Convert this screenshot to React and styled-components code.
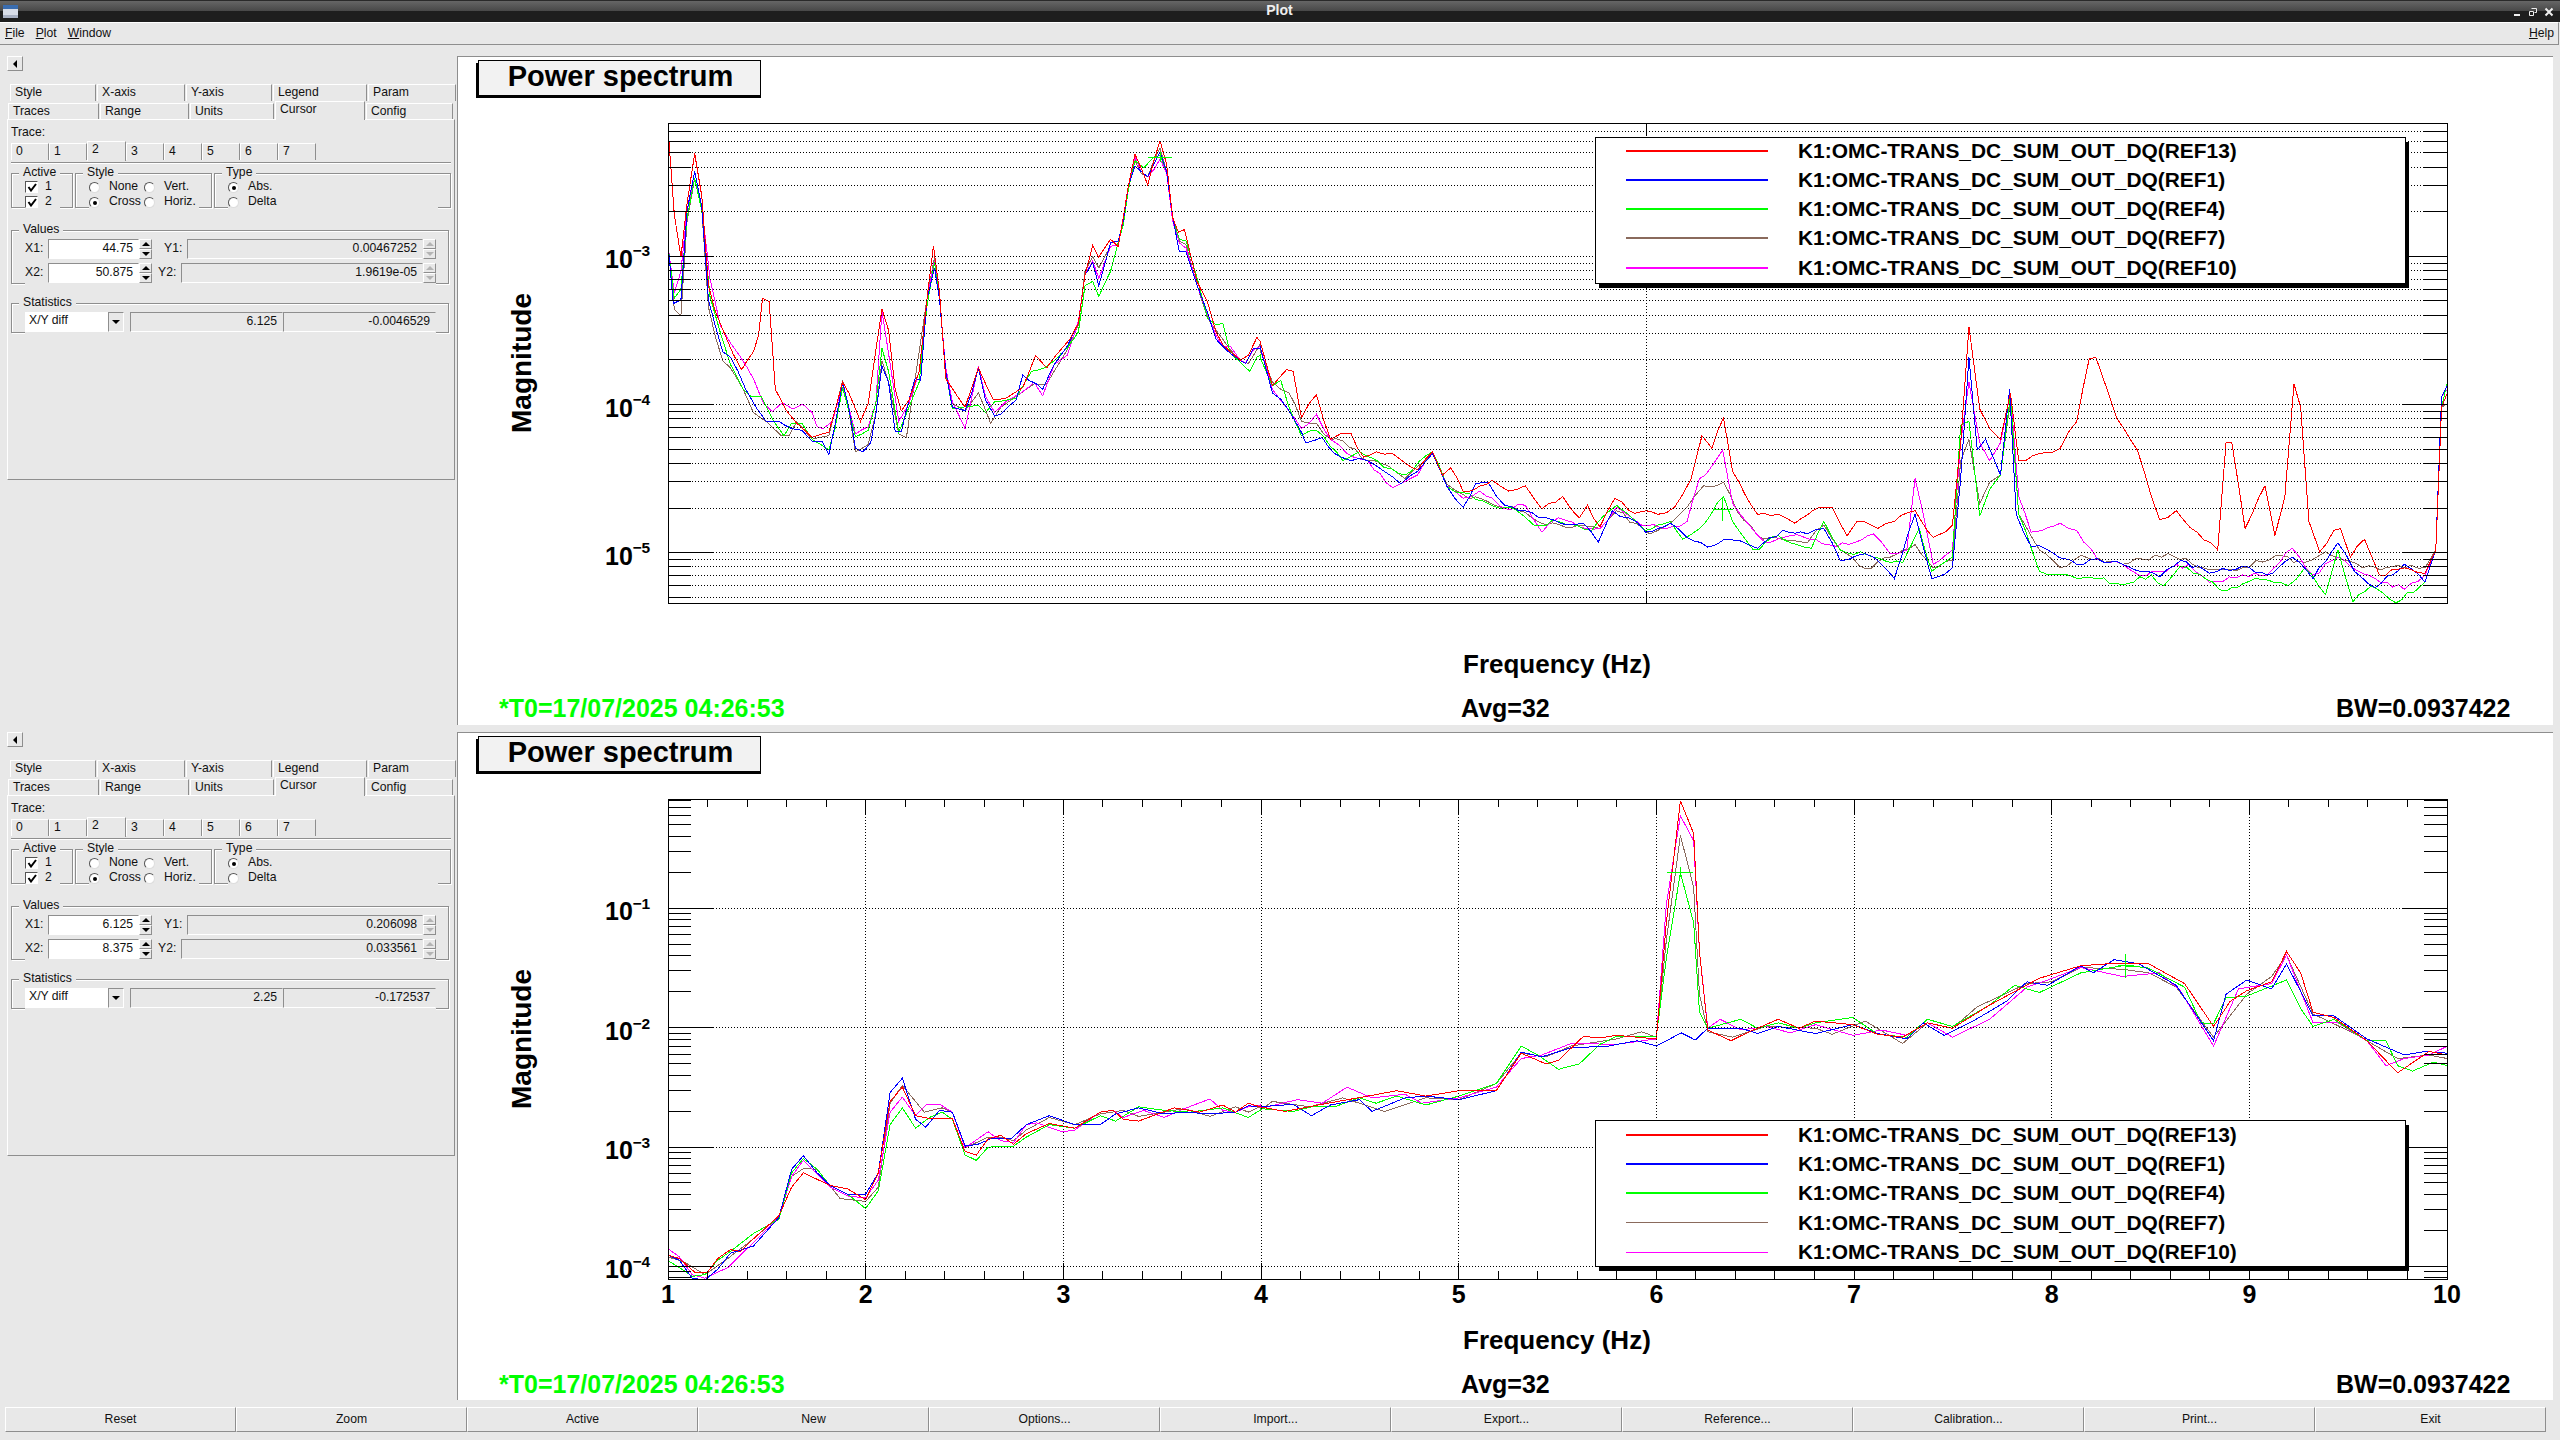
import styled, {createGlobalStyle} from 'styled-components'

const PANEL = '#e8e8e8'
const SHADE = '#8e8e8e'

const GlobalStyle = createGlobalStyle`
  html, body {
    margin: 0;
    width: 2560px;
    height: 1440px;
    overflow: hidden;
    background: ${PANEL};
  }
  * {
    box-sizing: border-box;
  }
`

const Window = styled.div`
  display: flex;
  flex-direction: column;
  width: 2560px;
  height: 1440px;
  background: ${PANEL};
  color: #111;
  font: 12.2px/14px "Liberation Sans", Arial, sans-serif;
`

const TitleBar = styled.header`
  display: grid;
  grid-template-columns: 1fr auto 1fr;
  align-items: center;
  height: 22px;
  padding: 0 6px 0 3px;
  background: linear-gradient(#2a2a2a 0 1px, #666 1px, #484848 11px, #1e1e1e 11px);
  color: #eee;
  font-weight: bold;
  font-size: 14px;
`

const TitleText = styled.span`
  margin: -2px 0 0 2px;
`

const WindowButtons = styled.div`
  display: flex;
  justify-content: flex-end;
  gap: 6px;
  margin-top: 1px;
`

const MenuBar = styled.nav`
  display: flex;
  align-items: center;
  gap: 11px;
  height: 23px;
  margin-right: 1px;
  padding: 0 4px 1px 5px;
  border-top: 1px solid #fff;
  border-bottom: 1px solid ${SHADE};
  border-right: 1px solid ${SHADE};
`

const MenuItem = styled.span`
  margin-left: ${(p) => (p.$push ? 'auto' : '0')};

  &::first-letter {
    text-decoration: underline;
  }
`

const Workspace = styled.main`
  display: grid;
  grid-template-rows: 669px 668px;
  row-gap: 7px;
  padding-top: 11px;
`

const Pane = styled.section`
  display: flex;
  min-height: 0;
`

const Side = styled.aside`
  flex: none;
  width: 457px;
  padding-left: 7px;
`

const Canvas = styled.div`
  flex: none;
  width: 2096px;
  background: #fff;
  border-left: 1px solid ${SHADE};
  border-top: 1px solid ${SHADE};

  svg {
    display: block;
    margin: -1px 0 0 -1px;
  }
`

const CollapseButton = styled.div`
  display: flex;
  align-items: center;
  justify-content: center;
  width: 16px;
  height: 15px;
  margin-bottom: 13px;
  border: 1px solid;
  border-color: #fff ${SHADE} ${SHADE} #fff;
`

const Arrow = styled.span`
  display: block;
  width: 0;
  height: 0;
  border-style: solid;
  border-color: transparent;
  ${(p) => {
    const color = p.$muted ? '#b4b4b4' : '#000'
    if (p.$dir === 'left') return `border-width: 4px 4px 4px 0; border-right-color: ${color};`
    if (p.$dir === 'up') return `border-width: 0 4px 4px; border-bottom-color: ${color};`
    return `border-width: 4px 4px 0; border-top-color: ${color};`
  }}
`

const TabRow = styled.div`
  display: flex;
  gap: 1px;
  height: ${(p) => p.$height}px;
  margin-left: ${(p) => p.$indent}px;
  margin-bottom: ${(p) => p.$gap}px;
`

const Tab = styled.div`
  position: relative;
  z-index: ${(p) => (p.$active ? 1 : 0)};
  width: ${(p) => p.$width}px;
  height: ${(p) => (p.$active ? 'calc(100% + 3px)' : '100%')};
  margin-top: ${(p) => (p.$active ? '-2px' : '0')};
  padding-left: 4px;
  background: ${PANEL};
  border-top: 1px solid #fff;
  border-left: 1px solid #fff;
  border-right: 1px solid ${SHADE};
  line-height: 14px;
`

const TabPanel = styled.div`
  width: 448px;
  height: 361px;
  padding-left: 3px;
  border: 1px solid;
  border-color: #fff ${SHADE} ${SHADE} #fff;
`

const TraceLabel = styled.div`
  padding-top: 5px;
  height: 23px;
`

const TraceTabs = styled.div`
  display: flex;
  height: 20px;
  width: 440px;
  padding-bottom: 3px;
  border-bottom: 1px solid ${SHADE};
  box-shadow: 0 1px #fff;
`

const TraceTab = styled.div`
  position: relative;
  width: ${(p) => (p.$active ? 39 : 38)}px;
  height: ${(p) => (p.$active ? 20 : 17)}px;
  margin-top: ${(p) => (p.$active ? -2 : 0)}px;
  padding-left: 4px;
  border-top: 1px solid #fff;
  border-left: 1px solid #fff;
  border-right: 1px solid ${SHADE};
  line-height: 15px;
`

const GroupRow = styled.div`
  display: flex;
  gap: 2px;
  margin-top: 3px;
`

const Group = styled.fieldset`
  width: ${(p) => p.$width}px;
  margin: ${(p) => p.$top || 0}px ${(p) => p.$right || 0}px 0 0;
  padding: 0;
  min-width: 0;
  border: 1px solid ${SHADE};
  box-shadow: inset 1px 1px #fff, 1px 1px #fff;

  legend {
    margin-left: 7px;
    padding: 0 4px;
    background: ${PANEL};
    line-height: 14px;
    transform: translateY(-1px);
  }
`

const GroupBody = styled.div`
  position: relative;
  margin: 0 12px -3px 13px;
  padding: ${(p) => p.$pad};
  background: ${PANEL};
`

const OptionGrid = styled.div`
  display: grid;
  grid-template-columns: ${(p) => p.$columns};
  grid-auto-rows: 14px;
  row-gap: 1px;
  margin-top: -1px;
`

const Option = styled.label`
  display: flex;
  align-items: center;
  gap: ${(p) => p.$gap}px;
  white-space: nowrap;
`

const CheckBox = styled.span`
  display: flex;
  align-items: center;
  justify-content: center;
  width: 13px;
  height: 12px;
  margin-top: 2px;
  background: #fff;
  border: 1px solid;
  border-color: #555 #fff #fff #555;
`

const Radio = styled.span`
  display: flex;
  flex: none;
  align-items: center;
  justify-content: center;
  width: 11px;
  height: 11px;
  margin-top: 3px;
  border-radius: 50%;
  background: #fff;
  border: 1px solid;
  border-color: #555 #ddd #ddd #555;

  &::after {
    content: '';
    width: 4px;
    height: 4px;
    border-radius: 50%;
    background: ${(p) => (p.$on ? '#000' : 'transparent')};
  }
`

const ValueRow = styled.div`
  display: flex;
  align-items: stretch;
  height: 20px;
  margin-bottom: ${(p) => p.$gap || 0}px;
`

const FieldLabel = styled.span`
  flex: none;
  width: 23px;
  margin-left: ${(p) => p.$indent || 0}px;
  line-height: 18px;
`

const NumberField = styled.div`
  flex: ${(p) => (p.$width ? 'none' : 1)};
  width: ${(p) => (p.$width ? `${p.$width}px` : 'auto')};
  margin-left: ${(p) => p.$indent || 0}px;
  padding-right: 5px;
  text-align: right;
  line-height: 17px;
  background: ${(p) => (p.$editable ? '#fff' : PANEL)};
  border: 1px solid;
  border-color: ${SHADE} ${(p) => (p.$editable ? '#fff' : PANEL)} #fff ${SHADE};
`

const Spinner = styled.div`
  display: grid;
  grid-template-rows: 1fr 1fr;
  flex: none;
  width: 13px;
`

const SpinButton = styled.span`
  display: flex;
  align-items: center;
  justify-content: center;
  border: 1px solid;
  border-color: #fff ${SHADE} ${SHADE} #fff;
`

const ComboBox = styled.div`
  display: flex;
  flex: none;
  width: 99px;
  background: #fff;
`

const ComboText = styled.span`
  flex: 1;
  padding-left: 4px;
  line-height: 17px;
`

const ComboButton = styled.span`
  display: flex;
  align-items: center;
  justify-content: center;
  width: 16px;
  background: ${PANEL};
  border: 1px solid;
  border-color: ${SHADE} #fff #fff ${SHADE};
`

const ButtonBar = styled.footer`
  display: flex;
  margin: 7px 0 0 5px;
`

const ActionButton = styled.button`
  width: 231px;
  height: 25px;
  padding: 0 0 2px;
  font: inherit;
  color: #111;
  background: ${PANEL};
  border: 1px solid;
  border-color: #fff ${SHADE} ${SHADE} #fff;
`

const PlotText = styled.text`
  font-family: "Liberation Sans", Arial, sans-serif;
  font-weight: bold;
  font-size: ${(p) => p.$size}px;
  fill: ${(p) => p.$color || '#000'};
`

const pairs = (flat) => {
  const out = []
  for (let i = 0; i < flat.length; i += 2) out.push([flat[i], flat[i + 1]])
  return out
}

// reference coordinates were read off two crops, converted back to page pixels here
const place = (left, right, top) => [
  ...pairs(left).map(([x, y]) => [460 + x / 1.96, top + y / 2.8]),
  ...pairs(right).map(([x, y]) => [1260 + x / 1.206, top + y / 2.8]),
]

const noise = (i, seed) => {
  const v = Math.sin(i * 12.9898 + seed * 78.233) * 43758.5453
  return (v - Math.floor(v)) * 2 - 1
}

// adds the bin-to-bin wiggle the anchor points leave out
const roughen = (points, seed) => {
  const out = []
  let counter = 0
  for (let i = 0; i < points.length - 1; i++) {
    const [ax, ay] = points[i]
    const [bx, by] = points[i + 1]
    const n = Math.max(1, Math.floor((bx - ax) / 5.75))
    for (let k = 0; k < n; k++) {
      const amp = ax > 1260 ? 2.6 : 0.6
      const jitter = k === 0 ? 0 : noise(counter++, seed) * amp
      out.push([ax + ((bx - ax) * k) / n, ay + ((by - ay) * k) / n + jitter])
    }
  }
  out.push(points[points.length - 1])
  return out
}

const RED = '#ff0000'
const BLUE = '#0000ff'
const GREEN = '#00ff00'
const BROWN = '#8a6a5c'
const MAGENTA = '#ff00ff'

const TOP_TRACES = [
  {
    color: BROWN,
    points: place(
      [407,540,420,725,433,745,445,480,460,360,474,450,487,720,500,800,515,870,530,890,555,950,575,1015,600,1040,630,1080,645,1080,660,1040,690,1090,723,1080,750,925,762,1010,775,1125,800,1105,815,1020,827,870,840,930,860,1075,875,1085,890,940,915,700,930,580,940,700,952,900,965,990,990,1010,1016,960,1040,1045,1060,1000,1090,970,1125,935,1150,935,1190,840,1212,770,1225,620,1240,578,1252,610,1275,550,1290,545,1300,470,1310,380,1323,310,1335,345,1348,355,1360,310,1372,275,1385,340,1397,470,1410,535,1423,545,1445,660,1465,750,1490,800,1510,840,1530,870,1545,878,1568,825],
      [0,840,15,930,35,960,50,1040,68,1045,85,1090,100,1095,130,1150,155,1165,175,1200,208,1130,225,1215,245,1245,275,1265,320,1295,345,1330,385,1330,410,1340,430,1290,470,1355,495,1325,515,1280,535,1220,559,1210,575,1290,600,1360,630,1370,660,1380,680,1330,700,1400,730,1452,760,1420,790,1385,812,1450,835,1430,845,1150,855,1090,868,1270,880,1210,893,1190,905,980,915,1300,940,1400,965,1450,990,1415,1040,1440,1095,1410,1145,1455,1185,1450,1225,1415,1260,1435,1285,1405,1300,1420,1330,1450,1380,1450,1405,1450,1418,1400,1425,1000,1432,990],
      50,
    ),
  },
  {
    color: MAGENTA,
    points: place(
      [407,540,420,680,433,620,445,450,460,360,474,440,490,640,510,770,530,820,550,860,575,920,595,990,612,1012,632,988,652,1005,672,992,690,1015,700,1055,712,1060,730,1040,750,935,762,1000,775,1075,800,1055,815,990,827,730,840,850,860,1040,880,990,900,900,915,700,930,590,940,700,952,890,965,985,990,1060,1005,960,1016,885,1030,970,1048,1015,1070,985,1100,960,1125,930,1142,968,1165,880,1190,855,1212,760,1225,630,1240,590,1252,640,1275,550,1290,545,1300,470,1310,380,1323,300,1335,340,1348,355,1360,335,1372,305,1385,345,1397,480,1410,540,1423,555,1445,660,1465,740,1482,800,1495,830,1510,830,1530,870,1540,875,1555,840,1568,830],
      [0,830,15,950,35,1010,50,1060,68,1020,85,1090,105,1130,130,1150,160,1225,190,1190,208,1130,225,1220,245,1255,265,1235,295,1285,320,1275,340,1350,360,1310,385,1335,410,1340,430,1280,460,1330,490,1340,515,1320,530,1200,545,1165,558,1120,570,1270,590,1330,610,1380,640,1360,670,1370,695,1390,740,1355,760,1410,780,1400,790,1200,800,1300,812,1440,835,1400,845,1100,855,930,868,1100,880,1150,893,1100,905,960,915,1250,930,1350,965,1325,985,1345,1010,1425,1040,1440,1060,1470,1085,1460,1120,1440,1145,1490,1185,1470,1215,1470,1245,1395,1270,1470,1300,1420,1345,1480,1380,1510,1405,1470,1418,1400,1425,970,1432,950],
      50,
    ),
  },
  {
    color: GREEN,
    points: place(
      [407,540,420,695,433,670,445,470,460,360,474,450,490,690,510,790,530,880,555,950,570,970,590,970,615,1040,635,1080,650,1045,670,1045,690,1090,723,1120,735,1060,750,945,762,1010,775,1083,800,1065,815,990,827,835,840,900,860,1070,880,1000,900,930,915,720,930,595,940,700,952,900,965,1005,985,1000,1016,995,1030,1015,1048,985,1090,975,1120,900,1145,890,1165,870,1190,835,1212,790,1225,660,1240,648,1252,690,1275,620,1290,540,1300,490,1310,390,1323,310,1340,330,1360,300,1372,295,1385,340,1397,470,1410,530,1423,535,1445,640,1465,750,1482,770,1495,765,1510,850,1530,875,1548,900,1562,860,1568,855],
      [0,860,15,940,25,925,35,1000,50,1080,68,1065,85,1110,100,1150,120,1125,150,1170,175,1190,208,1125,225,1220,245,1240,275,1270,310,1290,330,1330,360,1320,400,1345,430,1275,465,1345,495,1320,510,1370,530,1340,559,1250,570,1320,595,1400,625,1360,665,1395,680,1320,700,1400,740,1420,775,1435,795,1340,810,1460,835,1420,845,1050,855,1040,868,1305,880,1230,893,1190,905,970,915,1300,940,1460,965,1470,1010,1480,1040,1498,1075,1470,1090,1500,1110,1445,1165,1515,1200,1480,1240,1500,1260,1450,1285,1525,1300,1400,1318,1545,1340,1500,1370,1548,1405,1490,1418,1400,1425,1000,1432,930],
      50,
    ),
  },
  {
    color: BLUE,
    points: place(
      [407,530,418,710,433,700,445,450,460,340,474,440,487,700,500,770,515,845,530,860,545,900,560,950,580,1000,600,1040,625,1040,650,1060,670,1065,690,1095,710,1095,723,1133,735,1050,750,930,762,1000,775,1115,790,1125,805,1100,815,1020,827,885,840,930,853,1068,865,1068,880,980,892,920,903,925,915,700,930,610,940,700,952,900,965,1000,990,1010,1003,960,1016,890,1030,980,1048,1025,1060,1020,1090,980,1103,910,1115,925,1130,935,1142,950,1165,880,1190,830,1212,765,1225,630,1240,595,1252,660,1275,540,1290,535,1300,480,1310,380,1323,325,1335,340,1348,355,1360,320,1372,285,1385,340,1397,470,1410,565,1423,565,1445,660,1465,735,1482,810,1495,830,1510,850,1530,870,1540,878,1555,835,1568,835],
      [0,830,15,960,35,1010,50,1070,55,1100,75,1085,90,1130,110,1150,130,1150,150,1180,170,1215,190,1180,208,1130,225,1220,245,1280,260,1215,275,1210,295,1275,320,1290,345,1310,370,1330,390,1325,408,1378,425,1290,445,1310,465,1350,495,1325,515,1365,540,1392,560,1370,580,1375,600,1395,630,1345,660,1355,680,1340,700,1430,720,1415,740,1420,765,1480,790,1300,810,1480,835,1450,845,1200,855,860,865,1120,875,1090,893,1190,904,950,912,1300,930,1390,950,1400,985,1440,1010,1425,1040,1440,1085,1475,1110,1430,1145,1465,1185,1445,1215,1470,1245,1420,1270,1480,1300,1380,1320,1460,1345,1505,1380,1440,1405,1490,1418,1400,1425,970,1432,940],
      50,
    ),
  },
  {
    color: RED,
    points: place(
      [407,205,420,460,433,580,445,430,460,290,474,410,487,660,500,730,520,800,535,850,552,895,575,845,585,800,593,695,606,705,618,950,640,1010,660,1045,690,1085,723,1070,750,930,762,960,785,1040,800,990,827,725,840,785,853,950,865,1010,880,980,900,900,915,700,928,548,940,680,952,920,990,1000,1016,890,1045,978,1070,975,1103,945,1128,855,1150,890,1165,860,1195,810,1212,765,1225,630,1240,548,1252,580,1275,530,1290,550,1300,470,1310,380,1323,292,1335,330,1348,378,1360,310,1372,254,1385,320,1397,470,1408,510,1420,503,1445,650,1465,705,1482,790,1495,825,1510,845,1530,868,1545,855,1562,805,1568,815],
      [0,815,15,940,32,895,40,900,50,1030,68,965,85,1090,97,1075,110,1075,125,1140,140,1125,160,1130,190,1175,208,1125,220,1190,230,1170,245,1235,280,1205,300,1235,320,1220,340,1285,365,1250,385,1310,395,1275,410,1335,428,1255,445,1290,480,1300,500,1280,520,1200,533,1080,545,1115,559,1030,570,1180,600,1300,625,1300,645,1325,675,1280,690,1280,708,1360,720,1320,745,1340,765,1320,790,1290,812,1365,835,1330,845,1100,855,775,868,1005,880,1060,893,1090,905,960,915,1150,940,1130,965,1115,985,1040,1000,865,1008,860,1020,940,1033,1030,1058,1120,1075,1250,1085,1315,1105,1290,1130,1350,1155,1400,1165,1100,1172,1100,1188,1340,1212,1220,1224,1360,1236,1250,1247,935,1255,1000,1265,1320,1278,1405,1295,1345,1303,1340,1315,1420,1332,1370,1350,1470,1380,1450,1405,1465,1418,1400,1425,1000,1432,960],
      50,
    ),
  },
].map((t, i) => ({...t, points: roughen(t.points, i + 1)}))

const BOTTOM_TRACES = [
  {
    color: BROWN,
    points: place(
      [407,1335,440,1350,480,1385,520,1345,575,1285,625,1222,650,1110,673,1088,700,1090,745,1172,795,1180,820,1140,843,905,867,855,910,930,945,918,965,930,990,1030,1035,1000,1060,1000,1085,1010,1110,980,1155,945,1205,965,1255,935,1300,925,1330,942,1380,930,1420,920,1470,942,1520,915,1545,930,1568,915],
      [0,925,15,900,60,915,100,890,150,928,200,890,240,895,285,850,315,765,345,775,375,745,430,725,460,705,478,720,490,450,507,155,523,300,530,600,540,705,570,720,610,690,670,695,690,712,730,675,775,738,805,680,835,695,865,635,925,570,955,565,990,525,1040,530,1072,540,1105,580,1150,720,1190,600,1220,550,1238,490,1270,655,1320,710,1372,780,1410,770,1432,780],
      780,
    ),
  },
  {
    color: MAGENTA,
    points: place(
      [407,1312,430,1335,455,1385,480,1395,525,1365,575,1295,625,1225,650,1110,673,1065,725,1140,760,1165,795,1170,820,1120,843,930,867,888,893,940,915,908,940,908,965,930,990,1030,1035,985,1060,1010,1085,1015,1110,965,1130,960,1180,985,1205,980,1255,930,1280,925,1300,945,1340,925,1380,945,1420,920,1470,893,1495,925,1520,930,1545,915,1568,910],
      [0,920,45,895,75,905,105,860,135,890,175,880,195,905,240,890,285,860,315,780,340,770,375,738,430,740,478,725,490,350,507,100,523,170,530,480,540,695,555,670,580,700,610,690,640,708,670,685,715,715,750,700,780,715,805,680,835,720,880,670,925,580,950,560,990,525,1040,550,1085,540,1110,590,1150,745,1180,585,1220,570,1238,490,1270,680,1300,680,1335,730,1358,800,1380,780,1410,770,1432,745],
      780,
    ),
  },
  {
    color: GREEN,
    points: place(
      [407,1345,430,1365,455,1390,480,1385,505,1345,530,1320,575,1270,625,1230,650,1100,673,1060,700,1090,725,1135,760,1160,795,1200,820,1150,843,965,867,918,893,975,920,945,945,930,965,950,990,1050,1012,1065,1035,1028,1085,1025,1110,1000,1155,965,1205,975,1255,940,1285,955,1330,915,1380,925,1430,930,1495,918,1545,945,1568,925],
      [0,920,40,928,62,915,90,915,120,890,140,905,165,885,200,910,240,885,285,850,315,745,335,770,360,810,385,795,410,740,430,718,478,718,490,500,507,260,523,400,530,650,540,695,580,670,600,695,625,680,650,695,670,680,715,665,745,712,780,720,805,670,835,690,880,630,910,575,940,595,990,540,1040,520,1070,525,1115,580,1135,680,1150,682,1165,610,1190,605,1238,560,1255,640,1270,690,1295,670,1335,730,1358,730,1372,800,1390,815,1415,790,1432,800],
      780,
    ),
  },
  {
    color: BLUE,
    points: place(
      [407,1330,430,1345,455,1395,480,1400,505,1370,530,1325,575,1305,625,1225,650,1090,673,1052,700,1100,725,1135,760,1160,795,1160,820,1100,843,875,867,835,893,950,913,972,940,925,965,930,990,1025,1015,1020,1040,1005,1080,1005,1110,965,1155,940,1205,965,1255,965,1285,935,1330,918,1380,935,1420,930,1470,935,1520,930,1545,912,1568,915],
      [0,915,40,908,62,940,85,910,120,895,135,928,175,890,200,885,240,895,285,870,315,762,340,775,375,750,420,745,455,730,478,745,508,708,525,728,540,695,580,695,600,710,625,690,670,710,715,685,745,710,780,725,800,680,825,715,860,675,900,620,925,565,950,575,990,520,1005,540,1030,503,1060,515,1105,575,1150,730,1165,600,1190,560,1220,585,1238,515,1270,660,1295,660,1335,725,1380,770,1405,760,1432,765],
      780,
    ),
  },
  {
    color: RED,
    points: place(
      [407,1330,430,1340,460,1378,485,1378,505,1340,530,1315,550,1320,575,1285,625,1220,650,1140,673,1100,725,1135,760,1145,795,1175,820,1100,843,900,867,860,893,940,920,948,965,948,990,1040,1012,1050,1035,1005,1060,995,1085,1020,1110,990,1155,962,1205,975,1255,930,1280,925,1300,950,1330,955,1400,918,1450,930,1495,910,1520,930,1545,905,1568,915],
      [0,915,30,928,75,908,130,885,165,870,200,885,240,870,285,870,315,765,345,795,360,785,390,718,410,722,430,715,478,725,490,400,507,58,523,150,530,480,540,700,568,730,590,705,625,670,650,695,670,675,715,685,745,712,775,720,805,680,835,695,880,630,940,555,990,520,1020,515,1072,515,1115,570,1150,690,1170,620,1190,590,1220,565,1238,480,1255,540,1270,650,1295,665,1335,730,1372,820,1410,760,1432,770],
      780,
    ),
  },
]

const LEGEND_TEXT = ['REF13', 'REF1', 'REF4', 'REF7', 'REF10']
const LEGEND_COLORS = [RED, BLUE, GREEN, BROWN, MAGENTA]
const FRAME_LEFT = 668
const FRAME_RIGHT = 2447
const DOTS = '1 2'

function Ticks({spec}) {
  const {frameTop, frameBottom, decadeY, decadeHeight, decades, minorGrid, labelShift} = spec
  const rows = []
  decades.forEach((d) => {
    for (let m = 1; m < 10; m++) {
      const y = decadeY - (d + Math.log10(m)) * decadeHeight
      if (y > frameTop + 1 && y < frameBottom - 1) rows.push({y, major: m === 1, d})
    }
  })

  return (
    <g shapeRendering="crispEdges">
      {rows.map(({y, major}) => (
        <g key={y} stroke="#000">
          {(major || minorGrid) && (
            <line x1={FRAME_LEFT} x2={FRAME_RIGHT} y1={y} y2={y} strokeDasharray={DOTS} />
          )}
          <line x1={FRAME_LEFT} x2={FRAME_LEFT + (major ? 45 : 23)} y1={y} y2={y} />
          <line x1={FRAME_RIGHT} x2={FRAME_RIGHT - (major ? 45 : 23)} y1={y} y2={y} />
        </g>
      ))}
      {rows
        .filter((r) => r.major)
        .map(({y, d}) => (
          <g key={d} shapeRendering="auto">
            <PlotText $size={25} x={605} y={y + 12}>10</PlotText>
            <PlotText $size={15.5} x={632.5} y={y + labelShift}>{`\u2212${Math.abs(spec.decadeBase + d)}`}</PlotText>
          </g>
        ))}
    </g>
  )
}

function LinearAxis({frameTop, frameBottom}) {
  const marks = []
  for (let i = 0; i <= 45; i++) marks.push(i)
  const step = (FRAME_RIGHT - FRAME_LEFT) / 45

  return (
    <g shapeRendering="crispEdges" stroke="#000">
      {marks.map((i) => {
        const x = FRAME_LEFT + i * step
        const major = i % 5 === 0
        const len = major ? 16 : 8
        return (
          <g key={i}>
            {major && <line x1={x} x2={x} y1={frameTop} y2={frameBottom} strokeDasharray={DOTS} />}
            <line x1={x} x2={x} y1={frameTop} y2={frameTop + len} />
            <line x1={x} x2={x} y1={frameBottom} y2={frameBottom - len} />
          </g>
        )
      })}
    </g>
  )
}

function Legend({top, rows, lineWidths}) {
  return (
    <g>
      <rect x={1599} y={top + 4} width={810} height={146} fill="#000" shapeRendering="crispEdges" />
      <rect x={1595.5} y={top} width={810} height={146} fill="#fff" stroke="#000" shapeRendering="crispEdges" />
      {rows.map((y, i) => (
        <g key={LEGEND_TEXT[i]}>
          <line
            x1={1626}
            x2={1768}
            y1={y}
            y2={y}
            stroke={LEGEND_COLORS[i]}
            strokeWidth={lineWidths[i]}
            shapeRendering="crispEdges"
          />
          <PlotText $size={20.9} x={1798} y={y + 7}>
            {`K1:OMC-TRANS_DC_SUM_OUT_DQ(${LEGEND_TEXT[i]})`}
          </PlotText>
        </g>
      ))}
    </g>
  )
}

function Cross({x, y, h, v}) {
  return (
    <g stroke={GREEN} shapeRendering="crispEdges">
      <line x1={x - h} x2={x + h} y1={y} y2={y} />
      <line x1={x} x2={x} y1={y - v} y2={y + v} />
    </g>
  )
}

function PlotFrame({id, viewTop, height, frameTop, frameBottom, traces, children}) {
  const off = viewTop - 56
  return (
    <svg width={2096} height={height} viewBox={`457 ${viewTop} 2096 ${height}`}>
      <rect x={476} y={63 + off} width={3} height={35} fill="#000" shapeRendering="crispEdges" />
      <rect x={476} y={95 + off} width={285} height={3} fill="#000" shapeRendering="crispEdges" />
      <rect x={478.5} y={60.5 + off} width={282} height={35} fill="#f2f2f2" stroke="#000" shapeRendering="crispEdges" />
      <PlotText $size={29} x={620.5} y={86 + off} textAnchor="middle">Power spectrum</PlotText>

      <clipPath id={id}>
        <rect x={FRAME_LEFT} y={frameTop} width={FRAME_RIGHT - FRAME_LEFT} height={frameBottom - frameTop} />
      </clipPath>
      <g clipPath={`url(#${id})`} fill="none" shapeRendering="crispEdges">
        {traces.map((t) => (
          <polyline key={t.color} points={t.points.map((p) => p.join(',')).join(' ')} stroke={t.color} />
        ))}
      </g>
      {children}
      <rect
        x={FRAME_LEFT}
        y={frameTop}
        width={FRAME_RIGHT - FRAME_LEFT}
        height={frameBottom - frameTop}
        fill="none"
        stroke="#000"
        strokeWidth={1}
        shapeRendering="crispEdges"
      />

      <PlotText
        $size={28}
        textAnchor="middle"
        transform={`translate(531 ${(frameTop + frameBottom) / 2}) rotate(-90)`}>
        Magnitude
      </PlotText>
      <PlotText $size={26} x={1463} y={673 + off}>Frequency (Hz)</PlotText>
      <PlotText $size={25} $color={GREEN} x={499} y={717 + off}>*T0=17/07/2025 04:26:53</PlotText>
      <PlotText $size={25} x={1461} y={717 + off}>Avg=32</PlotText>
      <PlotText $size={25} x={2336} y={717 + off}>BW=0.0937422</PlotText>
    </svg>
  )
}

function TopPlot() {
  const frameTop = 123
  const frameBottom = 603
  return (
    <PlotFrame id="top-frame" viewTop={56} height={669} frameTop={frameTop} frameBottom={frameBottom} traces={TOP_TRACES}>
      <Ticks
        spec={{
          frameTop,
          frameBottom,
          decadeY: 256.4,
          decadeHeight: 148.1,
          decades: [-3, -2, -1, 0, 1],
          decadeBase: -3,
          minorGrid: true,
          labelShift: 0,
        }}
      />
      <g shapeRendering="crispEdges" stroke="#000">
        <line x1={1646.5} x2={1646.5} y1={frameTop} y2={frameBottom} strokeDasharray={DOTS} />
        <line x1={1646.5} x2={1646.5} y1={frameTop} y2={frameTop + 12} />
        <line x1={1646.5} x2={1646.5} y1={frameBottom} y2={frameBottom - 12} />
      </g>
      <Cross x={1160} y={157} h={12} v={5} />
      <Cross x={1722.7} y={509} h={10} v={12} />
      <Legend top={137.5} rows={[151.4, 180.4, 209.3, 238.2, 267.9]} lineWidths={[2, 2, 2, 2, 2]} />
    </PlotFrame>
  )
}

function BottomPlot() {
  const frameTop = 799
  const frameBottom = 1279
  const labels = [1, 2, 3, 4, 5, 6, 7, 8, 9, 10]
  return (
    <PlotFrame id="bottom-frame" viewTop={732} height={668} frameTop={frameTop} frameBottom={frameBottom} traces={BOTTOM_TRACES}>
      <Ticks
        spec={{
          frameTop,
          frameBottom,
          decadeY: 908.2,
          decadeHeight: 119.4,
          decades: [-4, -3, -2, -1, 0, 1],
          decadeBase: -1,
          minorGrid: false,
          labelShift: 1,
        }}
      />
      <LinearAxis frameTop={frameTop} frameBottom={frameBottom} />
      {labels.map((n) => (
        <PlotText key={n} $size={25} x={FRAME_LEFT + ((n - 1) * (FRAME_RIGHT - FRAME_LEFT)) / 9} y={1303} textAnchor="middle">
          {n}
        </PlotText>
      ))}
      <Cross x={1680.4} y={872} h={13} v={5} />
      <Cross x={2125.7} y={965.7} h={8} v={12} />
      <Legend top={1120.5} rows={[1135.4, 1164.3, 1193.2, 1222.5, 1252.1]} lineWidths={[2, 2, 2, 1, 1]} />
    </PlotFrame>
  )
}

const TOP_TABS = [['Style', 86], ['X-axis', 88], ['Y-axis', 86], ['Legend', 94], ['Param', 88]]
const BOTTOM_TABS = [['Traces', 91], ['Range', 89], ['Units', 84], ['Cursor', 90], ['Config', 87]]

function Check() {
  return (
    <svg width="10" height="9" viewBox="0 0 10 9">
      <path d="M1.5 4 L4 7.5 L9 1" fill="none" stroke="#000" strokeWidth="2" />
    </svg>
  )
}

function Spin({muted}) {
  return (
    <Spinner>
      <SpinButton><Arrow $dir="up" $muted={muted} /></SpinButton>
      <SpinButton><Arrow $dir="down" $muted={muted} /></SpinButton>
    </Spinner>
  )
}

function ControlPanel({values}) {
  return (
    <Side>
      <CollapseButton><Arrow $dir="left" /></CollapseButton>
      <TabRow $height={17} $indent={3} $gap={2}>
        {TOP_TABS.map(([name, width]) => <Tab key={name} $width={width}>{name}</Tab>)}
      </TabRow>
      <TabRow $height={16} $indent={1} $gap={0}>
        {BOTTOM_TABS.map(([name, width]) => (
          <Tab key={name} $width={width} $active={name === 'Cursor'}>{name}</Tab>
        ))}
      </TabRow>
      <TabPanel>
        <TraceLabel>Trace:</TraceLabel>
        <TraceTabs>
          {[0, 1, 2, 3, 4, 5, 6, 7].map((n) => <TraceTab key={n} $active={n === 2}>{n}</TraceTab>)}
        </TraceTabs>
        <GroupRow>
          <Group $width={62}>
            <legend>Active</legend>
            <GroupBody $pad="0 0 2px">
              <OptionGrid $columns="1fr">
                <Option $gap={7}><CheckBox><Check /></CheckBox>1</Option>
                <Option $gap={7}><CheckBox><Check /></CheckBox>2</Option>
              </OptionGrid>
            </GroupBody>
          </Group>
          <Group $width={137}>
            <legend>Style</legend>
            <GroupBody $pad="0 0 2px">
              <OptionGrid $columns="55px 1fr">
                <Option $gap={9}><Radio />None</Option>
                <Option $gap={9}><Radio />Vert.</Option>
                <Option $gap={9}><Radio $on />Cross</Option>
                <Option $gap={9}><Radio />Horiz.</Option>
              </OptionGrid>
            </GroupBody>
          </Group>
          <Group $width={237}>
            <legend>Type</legend>
            <GroupBody $pad="0 0 2px">
              <OptionGrid $columns="1fr">
                <Option $gap={9}><Radio $on />Abs.</Option>
                <Option $gap={9}><Radio />Delta</Option>
              </OptionGrid>
            </GroupBody>
          </Group>
        </GroupRow>
        <Group $width={438} $top={15}>
          <legend>Values</legend>
          <GroupBody $pad="2px 0 3px">
            <ValueRow $gap={4}>
              <FieldLabel>X1:</FieldLabel>
              <NumberField $editable $width={91}>{values.x1}</NumberField>
              <Spin />
              <FieldLabel $indent={12}>Y1:</FieldLabel>
              <NumberField>{values.y1}</NumberField>
              <Spin muted />
            </ValueRow>
            <ValueRow>
              <FieldLabel>X2:</FieldLabel>
              <NumberField $editable $width={91}>{values.x2}</NumberField>
              <Spin />
              <FieldLabel $indent={6}>Y2:</FieldLabel>
              <NumberField>{values.y2}</NumberField>
              <Spin muted />
            </ValueRow>
          </GroupBody>
        </Group>
        <Group $width={438} $top={12}>
          <legend>Statistics</legend>
          <GroupBody $pad="2px 0 3px">
            <ValueRow>
              <ComboBox>
                <ComboText>X/Y diff</ComboText>
                <ComboButton><Arrow $dir="down" /></ComboButton>
              </ComboBox>
              <NumberField $width={153} $indent={6}>{values.dx}</NumberField>
              <NumberField>{values.dy}</NumberField>
            </ValueRow>
          </GroupBody>
        </Group>
      </TabPanel>
    </Side>
  )
}

const ACTIONS = ['Reset', 'Zoom', 'Active', 'New', 'Options...', 'Import...', 'Export...', 'Reference...', 'Calibration...', 'Print...', 'Exit']

export default function App() {
  return (
    <Window>
      <GlobalStyle />
      <TitleBar>
        <svg width="15" height="13" viewBox="0 0 15 13">
          <rect width="15" height="13" fill="#d8dde8" />
          <rect width="15" height="4" fill="#3a6db0" />
          <rect y="10" width="15" height="3" fill="#aab2c4" />
        </svg>
        <TitleText>Plot</TitleText>
        <WindowButtons>
          <svg width="10" height="10" viewBox="0 0 10 10">
            <rect x="2" y="7" width="6" height="2" fill="#eee" />
          </svg>
          <svg width="10" height="10" viewBox="0 0 10 10">
            <path d="M3.5 1.5h5v4h-2M1.5 4.5h4v4h-4z" fill="none" stroke="#eee" />
          </svg>
          <svg width="10" height="10" viewBox="0 0 10 10">
            <path d="M1.5 1.5l7 7M8.5 1.5l-7 7" stroke="#eee" strokeWidth="2" />
          </svg>
        </WindowButtons>
      </TitleBar>
      <MenuBar>
        <MenuItem>File</MenuItem>
        <MenuItem>Plot</MenuItem>
        <MenuItem>Window</MenuItem>
        <MenuItem $push>Help</MenuItem>
      </MenuBar>
      <Workspace>
        <Pane>
          <ControlPanel values={{x1: '44.75', y1: '0.00467252', x2: '50.875', y2: '1.9619e-05', dx: '6.125', dy: '-0.0046529'}} />
          <Canvas><TopPlot /></Canvas>
        </Pane>
        <Pane>
          <ControlPanel values={{x1: '6.125', y1: '0.206098', x2: '8.375', y2: '0.033561', dx: '2.25', dy: '-0.172537'}} />
          <Canvas><BottomPlot /></Canvas>
        </Pane>
      </Workspace>
      <ButtonBar>
        {ACTIONS.map((label) => <ActionButton key={label}>{label}</ActionButton>)}
      </ButtonBar>
    </Window>
  )
}
